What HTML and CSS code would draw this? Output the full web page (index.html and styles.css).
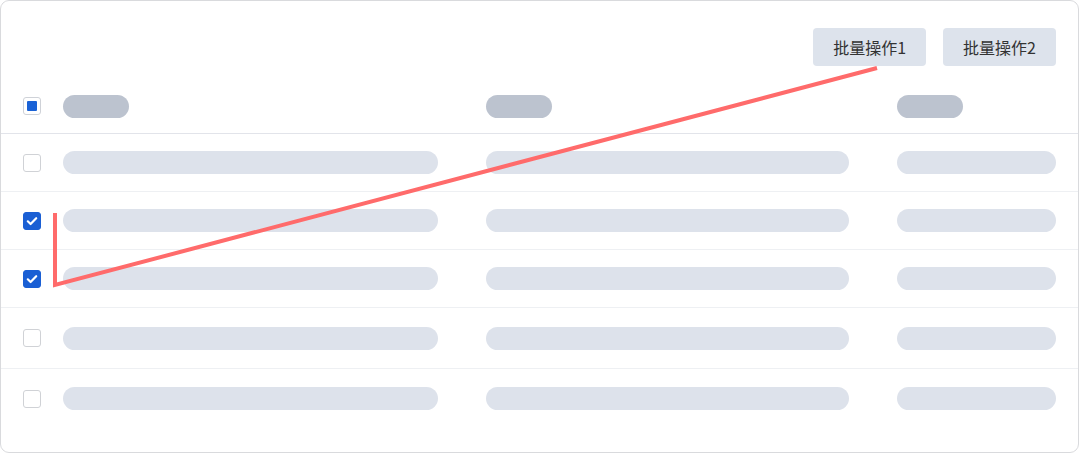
FILE: index.html
```html
<!DOCTYPE html>
<html lang="zh">
<head>
<meta charset="utf-8">
<link rel="stylesheet" href="styles.css">
</head>
<body>
<div class="card">
  <div class="toolbar">
    <button class="btn">批量操作1</button>
    <button class="btn">批量操作2</button>
  </div>
  <div class="row head">
    <span class="cb cb-ind"><span class="ind"></span></span>
    <span class="pill pill-h"></span>
    <span class="pill pill-h"></span>
    <span class="pill pill-h"></span>
  </div>
  <div class="row">
    <span class="cb"></span>
    <span class="pill w1"></span><span class="pill w2"></span><span class="pill w3"></span>
  </div>
  <div class="row">
    <span class="cb cb-on"><svg viewBox="0 0 18 18" width="18" height="18"><polyline points="4.8,9.3 7.6,12 13.2,6.2" fill="none" stroke="#fff" stroke-width="2.2" stroke-linecap="round" stroke-linejoin="round"/></svg></span>
    <span class="pill w1"></span><span class="pill w2"></span><span class="pill w3"></span>
  </div>
  <div class="row">
    <span class="cb cb-on"><svg viewBox="0 0 18 18" width="18" height="18"><polyline points="4.8,9.3 7.6,12 13.2,6.2" fill="none" stroke="#fff" stroke-width="2.2" stroke-linecap="round" stroke-linejoin="round"/></svg></span>
    <span class="pill w1"></span><span class="pill w2"></span><span class="pill w3"></span>
  </div>
  <div class="row tall">
    <span class="cb"></span>
    <span class="pill w1"></span><span class="pill w2"></span><span class="pill w3"></span>
  </div>
  <div class="row last">
    <span class="cb"></span>
    <span class="pill w1"></span><span class="pill w2"></span><span class="pill w3"></span>
  </div>
  <svg class="annot" width="1080" height="454" viewBox="0 0 1080 454">
    <polyline points="55,213 55,285 877,68" fill="none" stroke="#ff6b6b" stroke-width="4"/>
  </svg>
</div>
</body>
</html>
```

FILE: styles.css
```css
* { box-sizing: border-box; }
html, body { margin: 0; padding: 0; background: #fff; }
body { font-family: "Noto Sans CJK SC", "Noto Sans", sans-serif; }

.card {
  position: relative;
  width: 1079px;
  height: 453px;
  border: 1px solid #d9dadd;
  border-radius: 9px;
  background: #fff;
  overflow: hidden;
}

.toolbar {
  display: flex;
  justify-content: flex-end;
  gap: 17px;
  padding: 27px 22px 0 0;
}

.btn {
  height: 38px;
  padding: 0 20px;
  border: none;
  border-radius: 4px;
  background: #dde3ec;
  color: #333;
  font-family: inherit;
  font-size: 16px;
  line-height: 38px;
}

.row {
  display: grid;
  grid-template-columns: 40px 423px 411px 159px;
  align-items: center;
  height: 58px;
  padding-left: 22px;
  border-bottom: 1px solid #eef0f3;
}
.row.head {
  margin-top: 13px;
  height: 55px;
  border-bottom-color: #e2e4ea;
}
.row.tall { height: 61px; }
.row.last { border-bottom: none; height: 59px; }

.cb {
  width: 18px;
  height: 18px;
  border: 1px solid #d0d2d6;
  border-radius: 3px;
  background: #fff;
  display: flex;
  align-items: center;
  justify-content: center;
}
.cb-ind { border-color: #cfd2d8; }
.ind { width: 10px; height: 10px; background: #1a62d6; border-radius: 1px; }
.cb-on { background: #1a5fd4; border-color: #1a5fd4; }
.cb-on svg { display: block; margin: -1px; }

.pill {
  display: block;
  height: 23px;
  border-radius: 12px;
  background: #dde2eb;
}
.pill-h { width: 66px; background: #bcc3cf; }
.w1 { width: 375px; }
.w2 { width: 363px; }
.w3 { width: 159px; }

.annot {
  position: absolute;
  left: -1px;
  top: -1px;
  pointer-events: none;
}
```
